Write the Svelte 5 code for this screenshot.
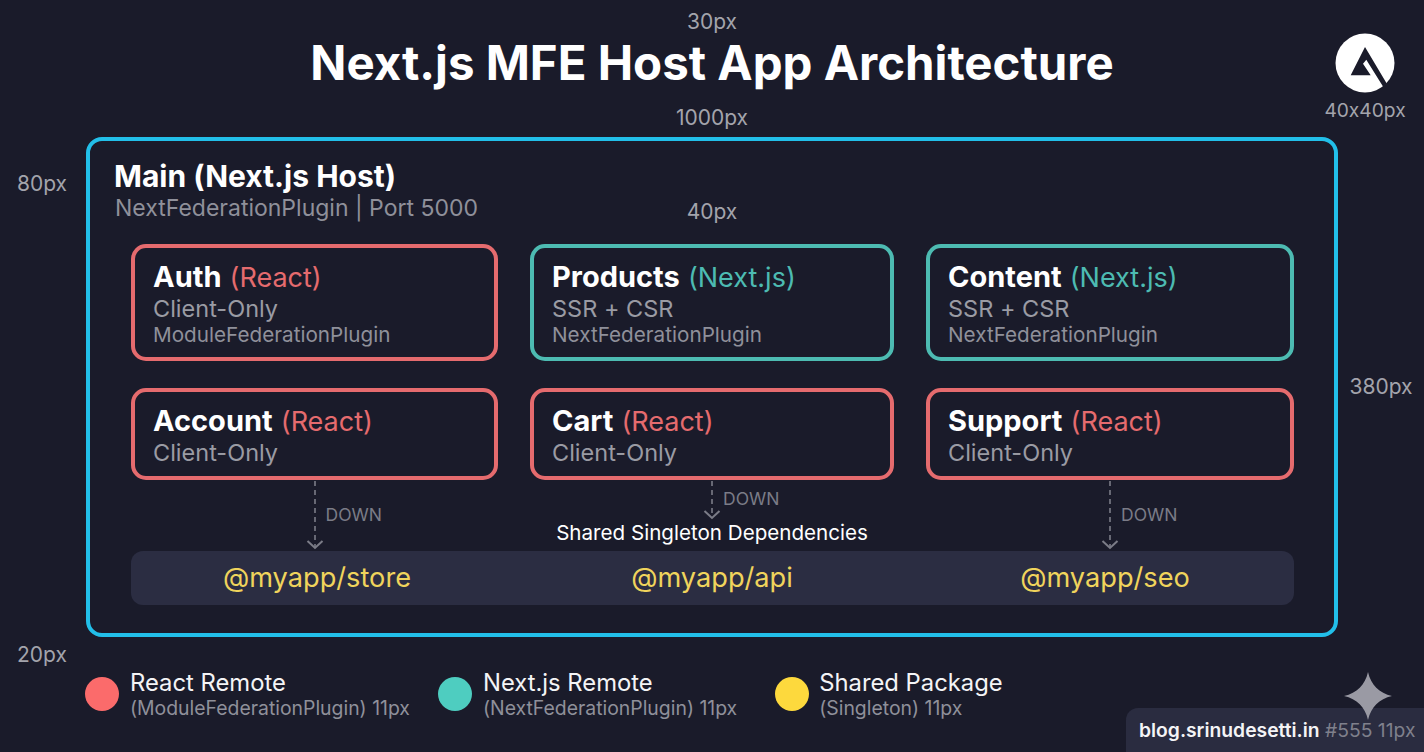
<script>
  const row1 = [
    { name: 'Auth', tech: 'React', kind: 'react', mode: 'Client-Only', plugin: 'ModuleFederationPlugin' },
    { name: 'Products', tech: 'Next.js', kind: 'next', mode: 'SSR + CSR', plugin: 'NextFederationPlugin' },
    { name: 'Content', tech: 'Next.js', kind: 'next', mode: 'SSR + CSR', plugin: 'NextFederationPlugin' }
  ];
  const row2 = [
    { name: 'Account', tech: 'React', kind: 'react', mode: 'Client-Only' },
    { name: 'Cart', tech: 'React', kind: 'react', mode: 'Client-Only' },
    { name: 'Support', tech: 'React', kind: 'react', mode: 'Client-Only' }
  ];
  const packages = ['@myapp/store', '@myapp/api', '@myapp/seo'];
  const legend = [
    { kind: 'react', title: 'React Remote', sub: '(ModuleFederationPlugin) 11px' },
    { kind: 'next', title: 'Next.js Remote', sub: '(NextFederationPlugin) 11px' },
    { kind: 'shared', title: 'Shared Package', sub: '(Singleton) 11px' }
  ];
</script>

{#snippet card(item)}
  <div class="card {item.kind}">
    <div class="card-title"><b>{item.name}</b> <span>({item.tech})</span></div>
    <div class="card-mode">{item.mode}</div>
    {#if item.plugin}
      <div class="card-plugin">{item.plugin}</div>
    {/if}
  </div>
{/snippet}

{#snippet arrow(height)}
  <svg class="arrow" width="20" height={height} viewBox="0 0 20 {height}" fill="none" stroke="#7b7c87" stroke-width="1.6">
    <path d="M10 1V{height - 2}" stroke-dasharray="5 4" />
    <path d="M2.5 {height - 9}L10 {height - 2}L17.5 {height - 9}" stroke-width="2" />
  </svg>
{/snippet}

<div class="page">
  <div class="note n30">30px</div>
  <h1>Next.js MFE Host App Architecture</h1>
  <div class="note n1000">1000px</div>

  <div class="logo">
    <svg width="60" height="60" viewBox="0 0 60 60">
      <circle cx="30" cy="30" r="29.5" fill="#fff" />
      <path d="M30 14L52 51L48 53.5L31.3 26.7L28 30.7L35.7 42.3H15.7Z" fill="#1a1b2a" />
    </svg>
    <span>40x40px</span>
  </div>

  <div class="note n80">80px</div>
  <div class="note n40">40px</div>
  <div class="note n380">380px</div>
  <div class="note n20">20px</div>

  <section class="host">
    <h2>Main (Next.js Host)</h2>
    <p class="host-sub">NextFederationPlugin | Port 5000</p>

    <div class="grid cards-a">
      {#each row1 as item}
        {@render card(item)}
      {/each}
    </div>
    <div class="grid cards-b">
      {#each row2 as item}
        {@render card(item)}
      {/each}
    </div>

    <div class="grid arrows">
      <div class="flow">
        {@render arrow(70)}
        <span class="down low">DOWN</span>
      </div>
      <div class="flow middle">
        {@render arrow(40)}
        <span class="down high">DOWN</span>
        <div class="shared-label">Shared Singleton Dependencies</div>
      </div>
      <div class="flow">
        {@render arrow(70)}
        <span class="down low">DOWN</span>
      </div>
    </div>

    <div class="shared">
      {#each packages as pkg}
        <div class="pkg">{pkg}</div>
      {/each}
    </div>
  </section>

  <div class="legend">
    {#each legend as entry}
      <div class="legend-item">
        <span class="dot {entry.kind}"></span>
        <div>
          <div class="legend-title">{entry.title}</div>
          <div class="legend-sub">{entry.sub}</div>
        </div>
      </div>
    {/each}
  </div>

  <div class="credit">
    <svg class="spark" width="50" height="50" viewBox="0 0 50 50">
      <path d="M25 1C28 14 36 22 49 25C36 28 28 36 25 49C22 36 14 28 1 25C14 22 22 14 25 1Z" fill="#9a9aa4" />
    </svg>
    <b>blog.srinudesetti.in</b> <span>#555 11px</span>
  </div>
</div>

<style>
  :global(body) {
    margin: 0;
    background: #1a1b2a;
  }

  .page {
    position: relative;
    width: 1424px;
    height: 752px;
    overflow: hidden;
    box-sizing: border-box;
    padding: 33px 86px 0;
    background: #1a1b2a;
    color: #fff;
    font-family: Inter, "Noto Sans", sans-serif;
    font-feature-settings: "calt" 0;
  }

  h1 {
    margin: 0;
    text-align: center;
    font-size: 47.4px;
    line-height: 60px;
    font-weight: 700;
    letter-spacing: 0;
  }

  .note {
    position: absolute;
    font-size: 21px;
    line-height: 24px;
    color: #a3a4ac;
    transform: translate(-50%, -50%);
  }
  .n30 { left: 712px; top: 22px; }
  .n1000 { left: 712px; top: 118px; }
  .n80 { left: 42px; top: 184px; }
  .n40 { left: 712px; top: 212px; }
  .n380 { left: 1381px; top: 387px; }
  .n20 { left: 42px; top: 655px; }

  .logo {
    position: absolute;
    left: 1325px;
    top: 33px;
    width: 80px;
    display: flex;
    flex-direction: column;
    align-items: center;
    gap: 5px;
    font-size: 19.2px;
    line-height: 24px;
    color: #a3a4ac;
  }

  .host {
    box-sizing: border-box;
    width: 1252px;
    height: 500px;
    margin-top: 44px;
    padding: 19px 44px 0 41px;
    border: 4px solid #22bfe9;
    border-radius: 16px;
    position: relative;
  }

  h2 {
    margin: 0 0 0 -17px;
    font-size: 30px;
    line-height: 32px;
    font-weight: 700;
  }

  .host-sub {
    margin: 2px 0 0 -16px;
    font-size: 23px;
    line-height: 28px;
    color: #8f909a;
  }

  .grid {
    display: grid;
    grid-template-columns: 367px 364px 368px;
    column-gap: 32px;
    width: 1163px;
  }

  .cards-a {
    margin-top: 22px;
    grid-auto-rows: 117px;
  }

  .cards-b {
    margin-top: 27px;
    grid-auto-rows: 92px;
  }

  .card {
    box-sizing: border-box;
    padding: 13px 18px;
    border: 4px solid;
    border-radius: 15px;
  }
  .card.react { border-color: #e56b6e; }
  .card.next { border-color: #4dbbb2; }

  .card-title {
    margin-top: -1px;
    font-size: 29px;
    line-height: 34px;
  }
  .card-title b { font-weight: 700; }
  .card-title span { font-weight: 400; font-size: 27px; }
  .react .card-title span { color: #e56b6e; }
  .next .card-title span { color: #4dbbb2; }

  .card-mode {
    font-size: 23.5px;
    line-height: 27px;
    color: #9a9ba4;
  }

  .card-plugin {
    font-size: 20.7px;
    line-height: 26px;
    color: #8f909a;
  }

  .arrows {
    height: 71px;
  }

  .flow {
    display: flex;
    flex-direction: column;
    align-items: center;
    position: relative;
  }

  .arrow { flex: none; }

  .down {
    position: absolute;
    left: calc(50% + 11px);
    font-size: 17.5px;
    line-height: 20px;
    color: #7b7c87;
  }
  .down.low { top: 25px; }
  .down.high { top: 9px; }

  .shared-label {
    margin-top: 1px;
    font-size: 20.6px;
    line-height: 24px;
    white-space: nowrap;
    color: #fff;
  }

  .shared {
    box-sizing: border-box;
    display: grid;
    grid-template-columns: 372px 418px 368px;
    width: 1163px;
    height: 54px;
    padding-bottom: 1px;
    align-items: center;
    border-radius: 12px;
    background: #2b2d42;
  }

  .pkg {
    text-align: center;
    font-size: 27.2px;
    color: #f0d45c;
  }

  .legend {
    display: flex;
    margin: 31px 0 0 -1px;
  }

  .legend-item {
    display: flex;
    align-items: center;
    gap: 11px;
    margin-right: 28px;
  }
  .legend-item:nth-child(2) { margin-right: 38px; }
  .legend-item:nth-child(3) { gap: 10px; }

  .dot {
    width: 34px;
    height: 34px;
    border-radius: 50%;
  }
  .dot.react { background: #fb6b6b; }
  .dot.next { background: #4ecdc0; }
  .dot.shared { background: #fdd93d; }

  .legend-title {
    padding-top: 1px;
    font-size: 23.8px;
    line-height: 27px;
    color: #f4f4f6;
  }

  .legend-sub {
    font-size: 19.4px;
    line-height: 24px;
    color: #8f909a;
  }

  .credit {
    position: absolute;
    right: 0;
    bottom: 0;
    box-sizing: border-box;
    width: 298px;
    height: 44px;
    padding: 9px 0 0 13px;
    border-top-left-radius: 12px;
    background: #2a2c40;
    font-size: 19.3px;
    line-height: 26px;
    white-space: nowrap;
  }
  .credit b { font-weight: 600; color: #f4f4f6; }
  .credit span { color: #7f808c; }

  .spark {
    position: absolute;
    left: 217px;
    top: -37px;
  }
</style>
